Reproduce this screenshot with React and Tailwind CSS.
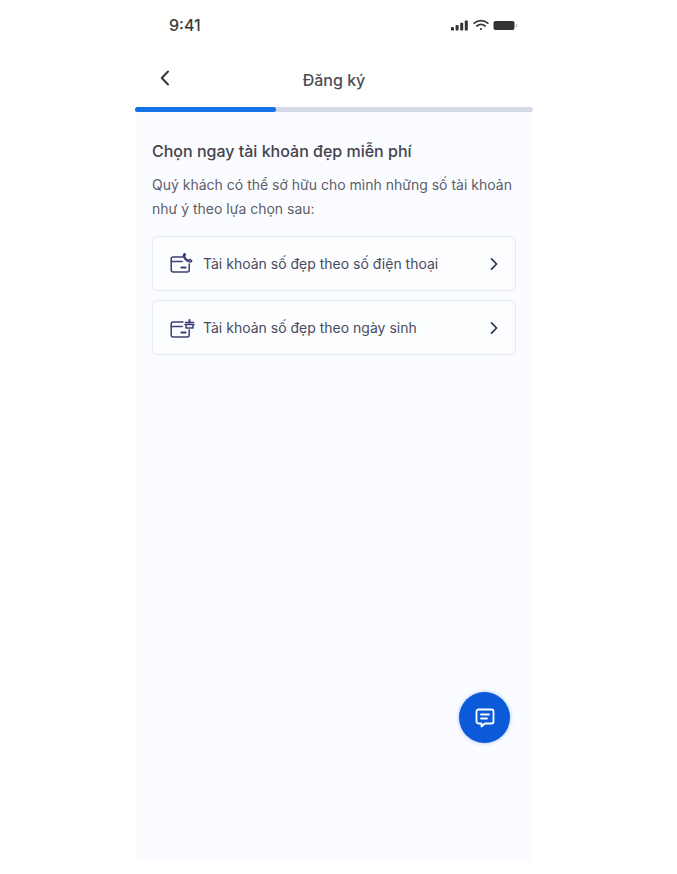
import React from "react";

function ChevronRight() {
  return (
    <svg width="12" height="14" viewBox="0 0 12 14" fill="none" stroke="#2f2f5f" strokeWidth="1.7" strokeLinecap="round" strokeLinejoin="round">
      <path d="M3.5 1.8 8.5 7 3.5 12.2" />
    </svg>
  );
}

function CardPhone() {
  return (
    <svg width="24" height="22" viewBox="0 0 24 22" fill="none" stroke="#3f3d78" strokeWidth="1.5" strokeLinecap="round" strokeLinejoin="round">
      <path d="M13 4H3.2C2 4 1.2 4.8 1.2 6v11c0 1.2.8 2 2 2h14c1.2 0 2-.8 2-2v-6" />
      <path d="M1.2 8.5h11" />
      <path d="M11.5 14.5h4" strokeWidth="2.2" />
      <path d="M15.4 1.6l-.9 1.6c.3 1.9 2 3.7 3.9 4.2l1.7-.9 1.6 1.4c-.5 1-1.5 1.3-2.4 1-2.9-.8-5.2-3.2-5.9-6 0-.9.4-1.8 1.2-2.3z" />
    </svg>
  );
}

function CardCake() {
  return (
    <svg width="26" height="22" viewBox="0 0 26 22" fill="none" stroke="#3f3d78" strokeWidth="1.5" strokeLinecap="round" strokeLinejoin="round">
      <path d="M13 5H3.2C2 5 1.2 5.8 1.2 7v11c0 1.2.8 2 2 2h14c1.2 0 2-.8 2-2v-5" />
      <path d="M1.2 9.5h11" />
      <path d="M11.5 15.5h4" strokeWidth="2.2" />
      <path d="M15 7.5h9M16 7.5V11h7V7.5" />
      <path d="M19.5 5.6V3" strokeWidth="2" />
      <path d="M15.5 5.4h8" />
    </svg>
  );
}

function Row({ icon, label }) {
  return (
    <div className="flex h-[55px] items-center rounded-[6px] border border-[#e6e8f2] bg-[#fcfdff] pl-[17px] pr-[15px]">
      <div className="flex w-[33px] shrink-0 items-center">{icon}</div>
      <span className="flex-1 text-[14px] leading-[20px] text-[#4a4a5e]">{label}</span>
      <ChevronRight />
    </div>
  );
}

export default function App() {
  return (
    <div className="relative h-[874px] w-[677px] bg-white font-['Inter','Noto_Sans',sans-serif]">
      <div className="relative ml-[135px] flex h-[862px] w-[398px] flex-col bg-[#fbfcff]">
        <div className="bg-white">
          <div className="flex h-[52px] items-center justify-between pl-[34px] pr-[15px] pb-[2px]">
            <span className="text-[16px] font-medium text-[#3c3c3c]">9:41</span>
            <div className="flex items-center gap-[4px]">
              <svg width="18" height="11" viewBox="0 0 18 11" fill="#333">
                <rect x="0" y="7" width="3" height="3.5" rx="0.7" />
                <rect x="4.6" y="5" width="3" height="5.5" rx="0.7" />
                <rect x="9.2" y="2.8" width="3" height="7.7" rx="0.7" />
                <rect x="13.8" y="0.5" width="3" height="10" rx="0.7" />
              </svg>
              <svg width="16" height="12" viewBox="0 0 16 12" fill="none" stroke="#333" strokeWidth="1.7" strokeLinecap="round">
                <path d="M1.2 4.2C5 .8 11 .8 14.8 4.2" />
                <path d="M3.9 7c2.4-2 5.8-2 8.2 0" />
                <circle cx="8" cy="10" r="1.1" fill="#333" stroke="none" />
              </svg>
              <svg width="25" height="11" viewBox="0 0 25 11">
                <rect x="0.5" y="1" width="21" height="9" rx="2" fill="#333" />
                <rect x="23" y="4" width="1.3" height="3" rx="0.6" fill="#bbb" />
              </svg>
            </div>
          </div>
          <div className="relative flex h-[55px] items-center justify-center">
            <svg className="absolute left-[23px] top-[17px]" width="14" height="18" viewBox="0 0 14 18" fill="none" stroke="#3a3a3a" strokeWidth="2.1" strokeLinecap="round" strokeLinejoin="round">
              <path d="M10 2.5 3.8 9l6.2 6.5" />
            </svg>
            <span className="text-[16px] font-medium text-[#4d4d55]">Đăng ký</span>
          </div>
          <div className="h-[5px] rounded-full bg-[#d5d9e8]">
            <div className="h-full w-[141px] rounded-full bg-[#1172ea]" />
          </div>
        </div>

        <div className="flex flex-col px-[17px] pt-[27px]">
          <h1 className="text-[16px] leading-[24px] font-medium text-[#43434d]">Chọn ngay tài khoản đẹp miễn phí</h1>
          <p className="mt-[10px] text-[14px] leading-[24px] text-[#5d5d69]">
            Quý khách có thể sở hữu cho mình những số tài khoản như ý theo lựa chọn sau:
          </p>
          <div className="mt-[15px] flex flex-col gap-[9px]">
            <Row icon={<CardPhone />} label="Tài khoản số đẹp theo số điện thoại" />
            <Row icon={<CardCake />} label="Tài khoản số đẹp theo ngày sinh" />
          </div>
        </div>

        <button className="absolute left-[324px] top-[692px] flex h-[51px] w-[51px] items-center justify-center rounded-full bg-[#0b5ad9] shadow-[0_0_4px_rgba(11,90,217,0.35)]">
          <svg width="24" height="24" viewBox="0 0 24 24" fill="none" stroke="white" strokeWidth="1.8" strokeLinecap="round" strokeLinejoin="round">
            <path d="M5.5 3.5h13c1.2 0 2 .8 2 2v10c0 1.2-.8 2-2 2h-6.5l-3.5 3v-3H5.5c-1.2 0-2-.8-2-2v-10c0-1.2.8-2 2-2z" />
            <path d="M8 8.5h8M8 12.5h6" />
          </svg>
        </button>
      </div>
    </div>
  );
}
